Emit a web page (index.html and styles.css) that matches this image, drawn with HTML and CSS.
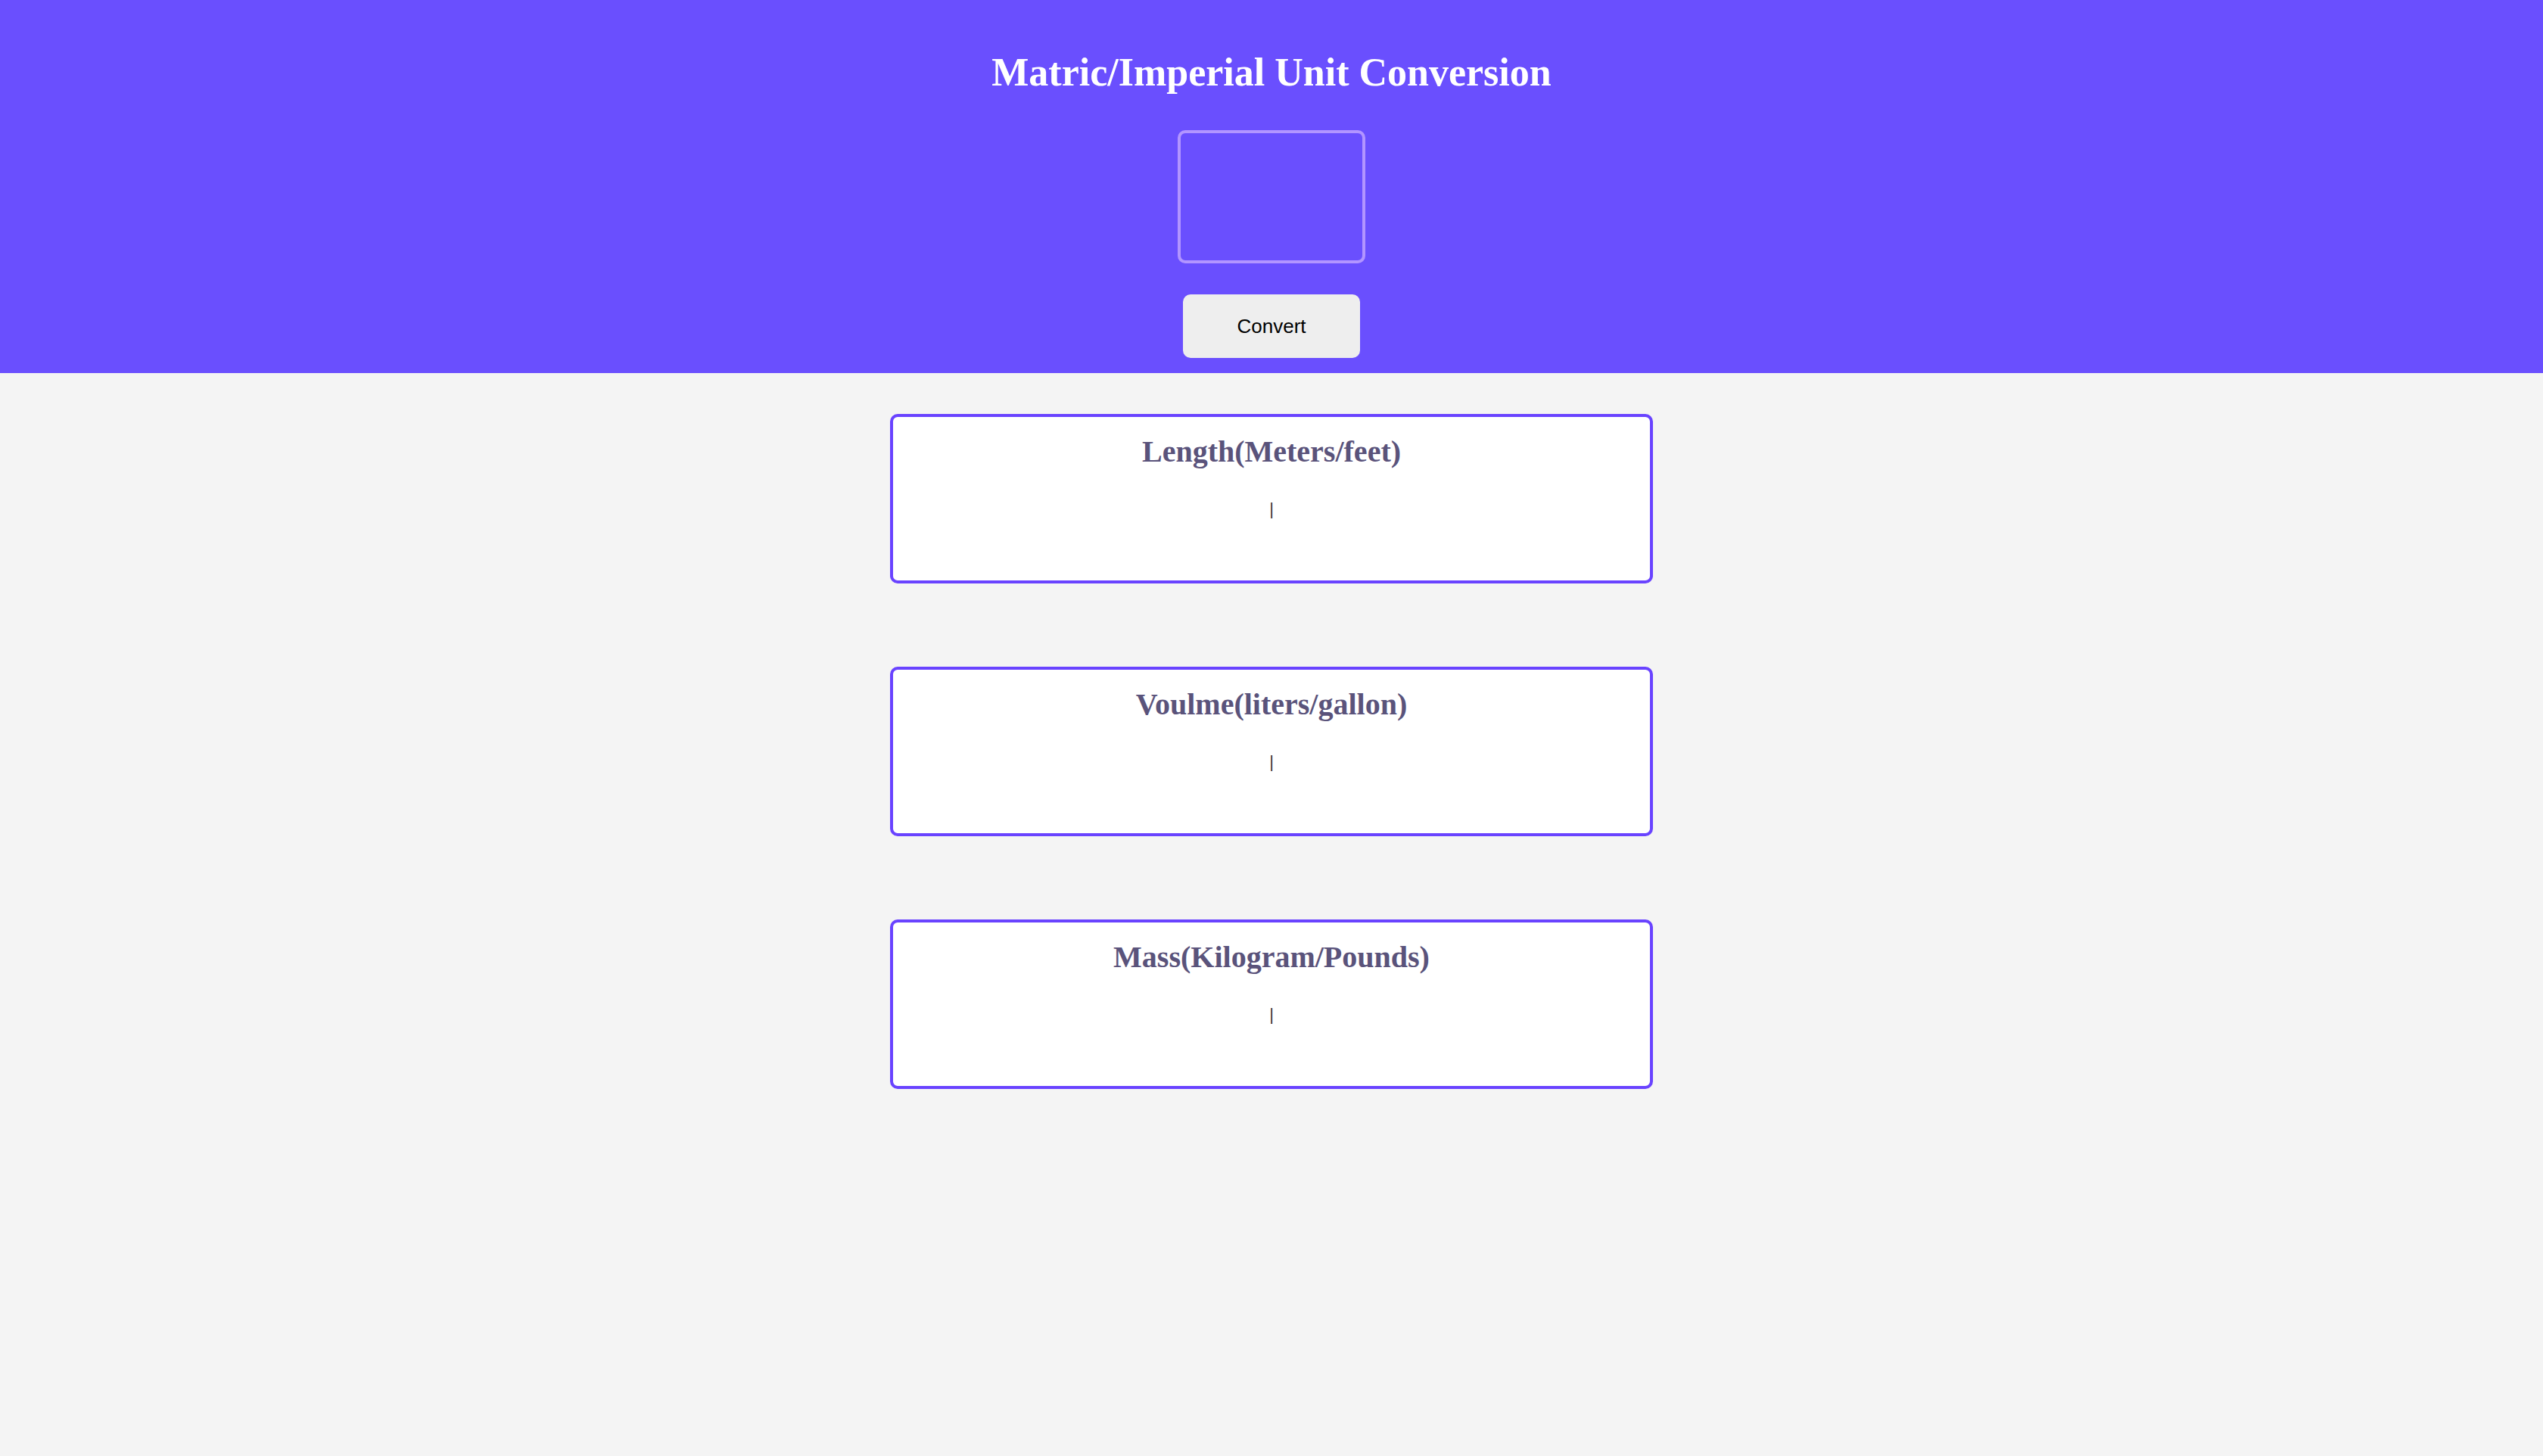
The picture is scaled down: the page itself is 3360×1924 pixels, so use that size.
FILE: index.html
```html
<!DOCTYPE html>
<html lang="en">
<head>
<meta charset="UTF-8">
<title>Unit Conversion</title>
<link rel="stylesheet" href="styles.css">
</head>
<body>
  <header class="hero">
    <h1 class="hero-title">Matric/Imperial Unit Conversion</h1>
    <input class="hero-input" type="number" aria-label="Value">
    <button class="hero-btn" type="button">Convert</button>
  </header>
  <main class="results">
    <section class="card">
      <h2 class="card-title">Length(Meters/feet)</h2>
      <p class="card-output">|</p>
    </section>
    <section class="card">
      <h2 class="card-title">Voulme(liters/gallon)</h2>
      <p class="card-output">|</p>
    </section>
    <section class="card">
      <h2 class="card-title">Mass(Kilogram/Pounds)</h2>
      <p class="card-output">|</p>
    </section>
  </main>
</body>
</html>
```

FILE: styles.css
```css
html, body {
  margin: 0;
  padding: 0;
  height: 100%;
}

body {
  background: #f4f4f4;
  font-family: "Liberation Serif", "Times New Roman", serif;
}

.hero {
  background: #6a4ffe;
  display: flex;
  flex-direction: column;
  align-items: center;
  padding: 64px 0 20px;
}

.hero-title {
  margin: 0;
  color: #ffffff;
  font-size: 52px;
  line-height: 63px;
  font-weight: 700;
}

.hero-input {
  box-sizing: border-box;
  width: 248px;
  height: 176px;
  margin-top: 45px;
  background: transparent;
  border: 4px solid #b295ff;
  border-radius: 10px;
  outline: none;
  color: #ffffff;
  font-size: 40px;
  text-align: center;
}

.hero-btn {
  box-sizing: border-box;
  width: 234px;
  height: 84px;
  margin-top: 41px;
  background: #eeeeee;
  border: none;
  border-radius: 10px;
  color: #000000;
  font-family: "Liberation Sans", Arial, sans-serif;
  font-size: 26px;
}

.results {
  display: flex;
  flex-direction: column;
  align-items: center;
  gap: 110px;
  padding-top: 54px;
}

.card {
  box-sizing: border-box;
  width: 1008px;
  height: 224px;
  background: #ffffff;
  border: 4px solid #6943ff;
  border-radius: 10px;
  padding-top: 22px;
  text-align: center;
}

.card-title {
  margin: 0;
  color: #5a537b;
  font-size: 40px;
  line-height: 48px;
  font-weight: 700;
}

.card-output {
  margin: 40px 0 0;
  color: #353535;
  font-family: "Liberation Sans", Arial, sans-serif;
  font-size: 22px;
  line-height: 24px;
}
```
